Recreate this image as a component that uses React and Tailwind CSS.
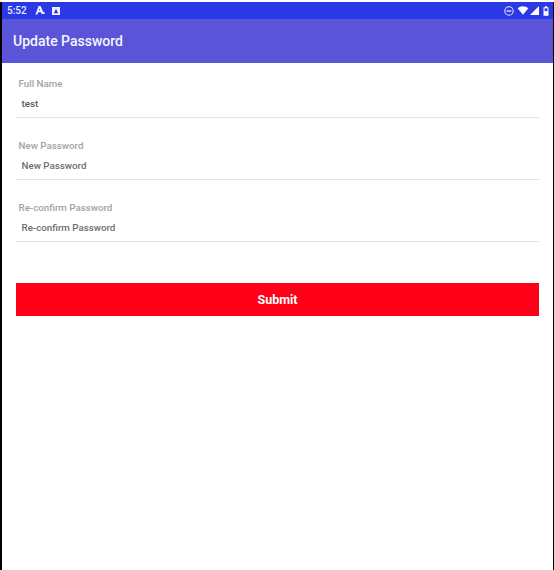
import React from 'react';

const fields = [
  { label: 'Full Name', value: 'test', dark: true },
  { label: 'New Password', value: 'New Password' },
  { label: 'Re-confirm Password', value: 'Re-confirm Password' },
];

const StatusIcons = () => (
  <div className="flex items-center">
    <svg width="10" height="10" viewBox="0 0 10 10" className="mr-[3px]">
      <circle cx="5" cy="5" r="4.2" fill="none" stroke="#dfe3ff" strokeWidth="1.1" />
      <rect x="2.6" y="4.3" width="4.8" height="1.4" fill="#dfe3ff" />
    </svg>
    <svg width="12" height="9" viewBox="0 0 12 10">
      <path d="M0 2.6C3.4-.6 8.6-.6 12 2.6L6 9.6Z" fill="#fff" />
    </svg>
    <svg width="9" height="9" viewBox="0 0 10 10" className="ml-[1px]">
      <path d="M10 0V10H0Z" fill="#fff" />
    </svg>
    <svg width="6" height="10" viewBox="0 0 7 11" className="ml-[4px]">
      <path d="M2.3 0H4.7V1.2H6.4V11H.6V1.2H2.3Z" fill="#fff" />
      <rect x="1.8" y="2.4" width="3.4" height="3.2" fill="#2b38e6" />
    </svg>
  </div>
);

const Field = ({ label, value, dark }) => (
  <div className="h-[62px] border-b border-[#e2e2e2] pt-[22px] first:h-[55px] first:pt-[15px]">
    <div className="pl-[2.5px] text-[9.75px] leading-[12px] font-medium text-[#a3a3a3]">{label}</div>
    <div className={`mt-[8px] pl-[5.5px] text-[9.75px] leading-[12px] font-medium ${dark ? 'text-[#5c5c5c]' : 'text-[#6e6e6e]'}`}>
      {value}
    </div>
  </div>
);

export default function App() {
  return (
    <div className="h-[570px] w-[554px] overflow-hidden bg-white pt-[2px] font-['Roboto',sans-serif]">
      <div className="h-[568px] border-r-[1px] border-l-2 border-black bg-white">
        <div className="flex h-[17px] items-center justify-between bg-[#2b38e6] pr-[4px] pl-[5px] text-white">
          <div className="flex items-center">
            <span className="text-[10px] font-medium text-[#e8eaff]">5:52</span>
            <svg width="10" height="9" viewBox="0 0 10 9" className="ml-[8px]">
              <path d="M3.6 0H5.6L8.2 6H9.6V8H6.6L6 6.3H3.2L2.4 8.6H.4ZM3.9 4.6H5.3L4.6 2.6Z" fill="#f0f1ff" fillRule="evenodd" />
            </svg>
            <svg width="8" height="8" viewBox="0 0 9 9" className="ml-[7px]">
              <path d="M0 0H9V9H0ZM4.5 2 2 7H7Z" fill="#f0f1ff" fillRule="evenodd" />
            </svg>
          </div>
          <StatusIcons />
        </div>
        <div className="flex h-[44px] items-center bg-[#5a55d8] pl-[11px] text-[14px] font-medium text-[#f4f4ff]">
          Update Password
        </div>
        <div className="pr-[14px] pl-[14px]">
          {fields.map((field) => (
            <Field key={field.label} {...field} />
          ))}
          <button className="mt-[41px] h-[33px] w-full bg-[#ff0019] pt-[1px] text-[12.5px] font-bold text-white">
            Submit
          </button>
        </div>
      </div>
    </div>
  );
}
